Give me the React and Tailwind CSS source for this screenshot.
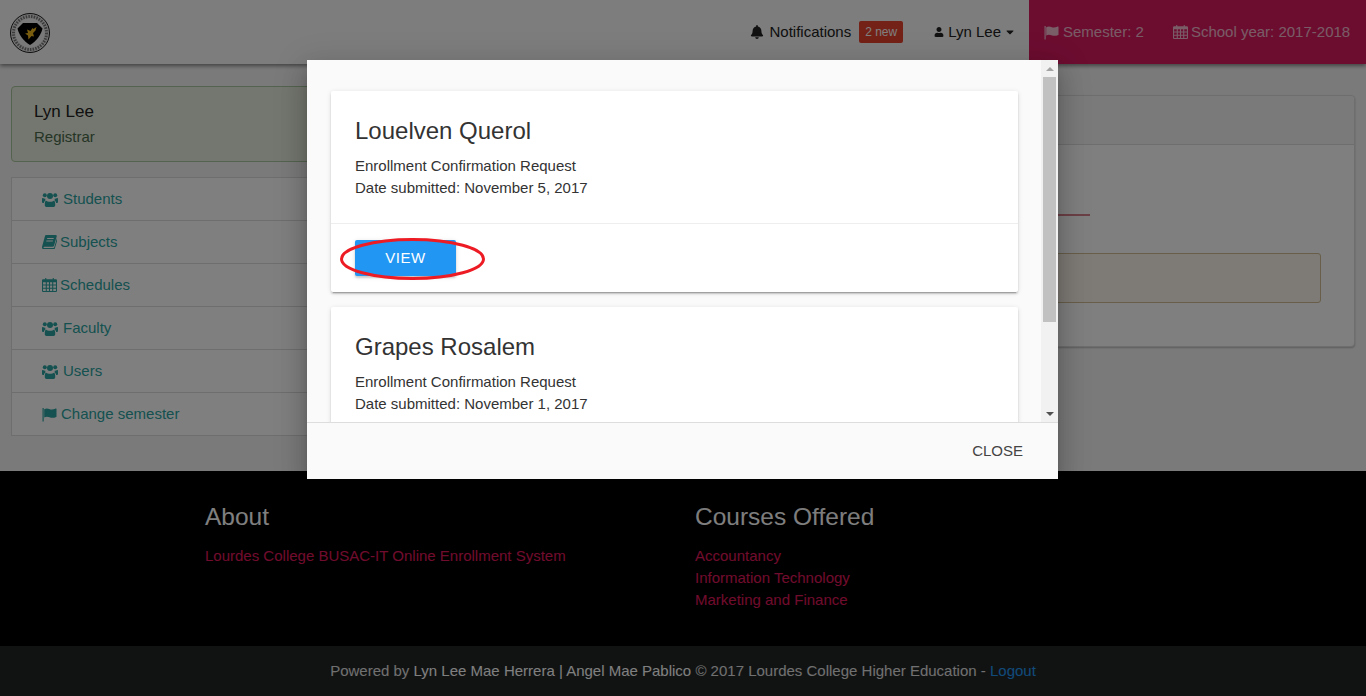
import { FaBell, FaCaretDown, FaUser } from "react-icons/fa";

function CalendarIcon({ size = 15 }) {
  return (
    <svg width={size} height={size} viewBox="0 0 14 14" fill="currentColor" className="inline-block shrink-0 -mt-[2px]">
      <path d="M1 2h2V1h1v1h6V1h1v1h2a1 1 0 0 1 1 1v10a1 1 0 0 1-1 1H1a1 1 0 0 1-1-1V3a1 1 0 0 1 1-1zM1 5v2h2.500V5H1zm3.500 0v2h2V5h-2zm3 0v2h2V5h-2zm3 0v2H13V5h-2.500zM1 8v2h2.500V8H1zm3.500 0v2h2V8h-2zm3 0v2h2V8h-2zm3 0v2H13V8h-2.500zM1 11v2h2.500v-2H1zm3.500 0v2h2v-2h-2zm3 0v2h2v-2h-2zm3 0v2H13v-2h-2.500z" fillRule="evenodd" />
    </svg>
  );
}

function FlagIcon({ size = 15 }) {
  return (
    <svg width={size} height={size} viewBox="0 0 15 15" fill="currentColor" className="inline-block shrink-0">
      <path d="M0.500 1h1.200v13.500H0.500z" />
      <path d="M2.200 2.300c2-1.300 3.500-1 5-.4 1.800.7 3.800.8 6-.2.500-.2 1.300-.2 1.300.4v7.300c0 .3-.1.500-.4.600-2.200 1.200-4.700 1-6.700.2-1.600-.6-3.200-.8-5.200.2z" />
    </svg>
  );
}

function UsersIcon() {
  return (
    <svg width="16" height="15" viewBox="0 0 16 15" fill="currentColor" className="inline-block shrink-0">
      <circle cx="2.800" cy="3.200" r="2" />
      <circle cx="13.200" cy="3.200" r="2" />
      <circle cx="8" cy="4" r="3" />
      <path d="M3.800 8.500c.9.900 2.500 1.300 4.200 1.300s3.300-.4 4.200-1.300c.6.800 1 2 1 3.400v1.300c0 1-.7 1.700-1.700 1.700h-7c-1 0-1.700-.7-1.700-1.700v-1.300c0-1.400.4-2.600 1-3.400z" />
      <path d="M0 6.800c0-.7.500-1 1-.7.700.5 1.500.6 2.200.5-.1.500 0 1 .3 1.300-.9.800-1.500 1.900-1.700 3.100H.9c-.5 0-.9-.4-.9-.9zM16 6.800c0-.7-.5-1-1-.7-.7.500-1.500.6-2.200.5.100.5 0 1-.3 1.300.9.800 1.500 1.900 1.700 3.100h.9c.5 0 .9-.4.900-.9z" />
    </svg>
  );
}

function BookIcon() {
  return (
    <svg width="15" height="14" viewBox="0 0 15 14" fill="currentColor" className="inline-block shrink-0">
      <path d="M4 0h9.500c1 0 1.500.7 1.200 1.600l-2.600 9c-.2.800-.8 1.200-1.500 1.200H2.500c-.7 0-1 .3-1 .6 0 .3.300.6.800.6h9.200c.3 0 .6-.2.700-.5l2.700-9.300c.5.300.8.800.6 1.500l-2.600 8.600c-.2.700-.8 1.200-1.500 1.200H2c-1.200 0-2-1-2-2.200 0-.3 0-.6.100-.9L3 1c.2-.6.500-1 1-1zm1.300 3l-.3 1h6.500l.3-1zm-.8 2.500l-.3 1h6.500l.3-1z" fillRule="evenodd" />
    </svg>
  );
}

function Logo() {
  return (
    <svg width="40" height="40" viewBox="0 0 40 40" className="shrink-0">
      <circle cx="20" cy="20" r="19.500" fill="#e4e4e4" stroke="#1c1c1c" strokeWidth="1" />
      <circle cx="20" cy="20" r="16.500" fill="none" stroke="#777" strokeWidth="3" strokeDasharray="1.500 1.200" />
      <circle cx="20" cy="20" r="14.500" fill="#f2f2f2" />
      <path d="M13 10h14l5.500 5.500C31 22 26.500 28 20 32 13.500 28 9 22 7.500 15.500z" fill="#000" />
      <path d="M26.500 14l-3 2-1-1-2 3-3.500-1.500 1 3.500-3 .5 3 2 .5 4 3-3.500 2.500.5-1-3.500 2.500-2.500z" fill="#f2b91d" />
    </svg>
  );
}

const sideLinks = [
  { label: "Students", icon: <UsersIcon />, gap: "gap-[5px]" },
  { label: "Subjects", icon: <BookIcon />, gap: "gap-[3px]" },
  { label: "Schedules", icon: <CalendarIcon />, gap: "gap-[3px]" },
  { label: "Faculty", icon: <UsersIcon />, gap: "gap-[5px]" },
  { label: "Users", icon: <UsersIcon />, gap: "gap-[5px]" },
  { label: "Change semester", icon: <FlagIcon />, gap: "gap-1" },
];

function RequestCard({ name, date, marked }) {
  return (
    <div className="bg-white rounded-[2px] shadow-[0_2px_2px_0_rgba(0,0,0,0.14),0_1px_5px_0_rgba(0,0,0,0.12),0_3px_1px_-2px_rgba(0,0,0,0.2)] shrink-0">
      <div className="p-6 border-b border-[#eeeeee] h-[133px]">
        <h3 className="text-2xl leading-8 text-[#333] mb-2">{name}</h3>
        <p className="leading-[22px] text-[#333]">Enrollment Confirmation Request</p>
        <p className="leading-[22px] text-[#333]">Date submitted: {date}</p>
      </div>
      <div className="px-6 pt-4 pb-4 relative">
        <button className="w-[101px] h-9 bg-[#2196f3] text-white rounded-[2px] text-[15px] font-medium tracking-[0.5px] shadow-[0_2px_2px_0_rgba(0,0,0,0.14),0_1px_5px_0_rgba(0,0,0,0.12)]">
          VIEW
        </button>
        {marked && (
          <svg width="146" height="42" viewBox="0 0 146 42" fill="none" className="absolute left-[9px] top-[14px]">
            <ellipse cx="72.500" cy="21" rx="71" ry="19.500" stroke="#ed1c24" strokeWidth="3" />
          </svg>
        )}
      </div>
    </div>
  );
}

export default function App() {
  return (
    <div className="relative h-screen overflow-hidden flex flex-col bg-[#f5f5f5] text-[15px] text-[#333] font-['Liberation_Sans',Arial,sans-serif]">
      {/* Navbar */}
      <nav className="h-16 shrink-0 flex items-center bg-[#fafafa] shadow-[0_2px_4px_rgba(0,0,0,0.45)] relative">
        <div className="pl-[10px] mt-[2px]">
          <Logo />
        </div>
        <div className="ml-auto flex items-center h-full whitespace-nowrap">
          <span className="flex items-center gap-[5px] text-[#222] mr-2">
            <FaBell size={14} />
            Notifications
          </span>
          <span className="bg-[#e8432e] text-white text-xs rounded-[2px] w-11 justify-center h-[22px] flex items-center mr-[31px]">2 new</span>
          <span className="flex items-center gap-1 text-[#222] mr-[13px]">
            <FaUser size={10} />
            Lyn Lee
            <FaCaretDown size={12} className="-ml-[1px]" />
          </span>
          <div className="h-full bg-[#d81b60] text-white/70 flex items-center pl-[15px] gap-[29px] w-[337px]">
            <span className="flex items-center gap-1"><FlagIcon />Semester: 2</span>
            <span className="flex items-center gap-[3px]"><CalendarIcon />School year: 2017-2018</span>
          </div>
        </div>
      </nav>

      {/* Main */}
      <main className="flex-1 flex px-[11px] gap-[22px] min-h-0">
        <aside className="w-[319px] shrink-0 pt-[22px]">
          <div className="h-[76px] border border-[#a9c79c] bg-[#e8eedf] rounded px-[22px] pt-[13px] text-[#4a6a4b]">
            <p className="text-[17px] leading-6 text-[#222]">Lyn Lee</p>
            <p className="leading-[26px]">Registrar</p>
          </div>
          <ul className="mt-[15px] border border-b-0 border-[#dddddd] bg-white">
            {sideLinks.map((link) => (
              <li
                key={link.label}
                className={`h-[43px] flex items-center pl-[30px] border-b border-[#dddddd] text-[#2aa3a0] ${link.gap}`}
              >
                {link.icon}
                {link.label}
              </li>
            ))}
          </ul>
        </aside>

        <section className="flex-1 pt-[31px]">
          <div className="h-[252px] bg-white border border-[#dddddd] rounded shadow-[0_1px_2px_rgba(0,0,0,0.25)]">
            <div className="h-[49px] bg-[#f5f5f5] border-b border-[#dddddd] rounded-t" />
            <div className="px-[33px]">
              <div className="mt-[69px] h-[2px] w-[704px] bg-[#d9808f]" />
              <div className="mt-[37px] h-[50px] bg-[#fdf5ea] border border-[#d0bd94] rounded-[3px]" />
            </div>
          </div>
        </section>
      </main>

      {/* Footer */}
      <footer className="shrink-0 bg-black">
        <div className="h-[175px] pl-[205px] pt-[30px] flex">
          <div className="w-[490px]">
            <h4 className="text-[24.500px] leading-8 text-white">About</h4>
            <p className="mt-[12px] leading-[22px] text-[#e0195c]">Lourdes College BUSAC-IT Online Enrollment System</p>
          </div>
          <div>
            <h4 className="text-[24.500px] leading-8 text-white">Courses Offered</h4>
            <ul className="mt-[12px] leading-[22px] text-[#e0195c]">
              <li>Accountancy</li>
              <li>Information Technology</li>
              <li>Marketing and Finance</li>
            </ul>
          </div>
        </div>
        <div className="h-[50px] bg-[#232727] flex items-center justify-center text-[#e0e0e0]">
          <p>
            Powered by <span className="text-white">Lyn Lee Mae Herrera | Angel Mae Pablico</span> © 2017 Lourdes College Higher Education - <span className="text-[#2196f3]">Logout</span>
          </p>
        </div>
      </footer>

      {/* Modal overlay */}
      <div className="absolute inset-0 bg-black/50" />
      <div className="absolute left-[307px] top-[60px] w-[751px] h-[419px] bg-[#fafafa] flex flex-col shadow-[0_16px_24px_2px_rgba(0,0,0,0.14),0_6px_30px_5px_rgba(0,0,0,0.12),0_8px_10px_-5px_rgba(0,0,0,0.3)]">
        <div className="flex-1 flex min-h-0">
          <div className="flex-1 overflow-hidden pt-[31px] pl-6 pr-[23px] flex flex-col gap-[15px]">
            <RequestCard name="Louelven Querol" date="November 5, 2017" marked />
            <RequestCard name="Grapes Rosalem" date="November 1, 2017" />
          </div>
          <div className="w-[17px] shrink-0 bg-[#f1f1f1] flex flex-col items-center">
            <div className="h-[17px] shrink-0 flex items-center justify-center">
              <div className="w-0 h-0 border-x-[4px] border-x-transparent border-b-[4px] border-b-[#a3a3a3]" />
            </div>
            <div className="w-[13px] h-[245px] bg-[#c1c1c1]" />
            <div className="mt-auto h-[17px] shrink-0 flex items-center justify-center">
              <div className="w-0 h-0 border-x-[4px] border-x-transparent border-t-[4px] border-t-[#505050]" />
            </div>
          </div>
        </div>
        <div className="h-[57px] shrink-0 border-t border-[#dddddd] flex items-center justify-end pr-[35px] text-[#444]">
          CLOSE
        </div>
      </div>
    </div>
  );
}
